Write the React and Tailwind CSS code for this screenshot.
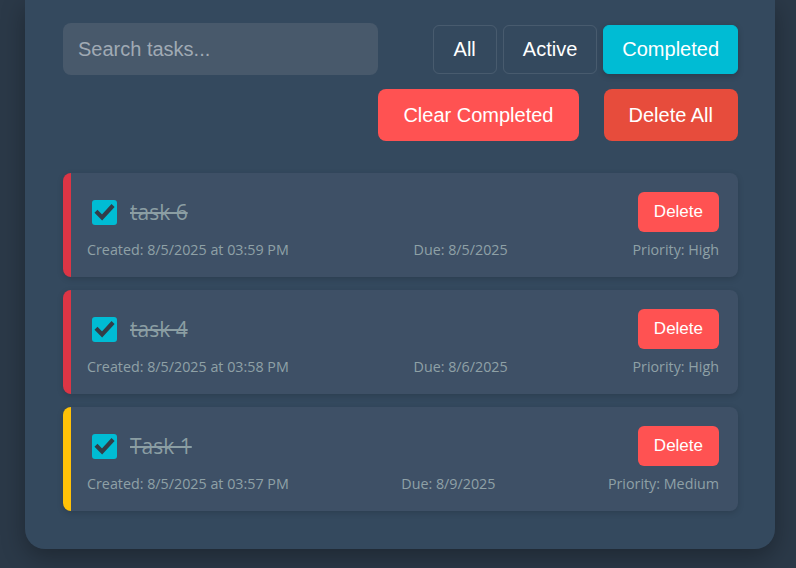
import React from 'react';

const tasks = [
    { id: 6, title: 'task 6', created: '8/5/2025 at 03:59 PM', due: '8/5/2025', priority: 'High' },
    { id: 4, title: 'task 4', created: '8/5/2025 at 03:58 PM', due: '8/6/2025', priority: 'High' },
    { id: 1, title: 'Task 1', created: '8/5/2025 at 03:57 PM', due: '8/9/2025', priority: 'Medium' },
];

function TaskCard({ task }) {
    const border = task.priority === 'High' ? 'border-[#dc3545]' : 'border-[#ffc107]';
    return (
        <div className={`bg-[#3e5066] rounded-lg border-l-[8px] ${border} pl-4 pr-[19px] pt-[19px] pb-[18px] shadow-[0_2px_6px_rgba(0,0,0,0.15)]`}>
            <div className="flex items-center justify-between h-10">
                <div className="flex items-center gap-[13px] pl-[5px]">
                    <div className="w-[25px] h-[25px] bg-[#00bcd4] rounded-[3px] flex items-center justify-center">
                        <svg className="w-[21px] h-[21px]" viewBox="0 0 20 20" fill="none">
                            <path d="M3.3 10.3l4.4 4.4L16.8 4.8" stroke="#333d48" strokeWidth="4" strokeLinecap="square" />
                        </svg>
                    </div>
                    <span className="font-['Open_Sans',sans-serif] text-[21px] text-[#8b9ea3] line-through translate-y-[1px]">{task.title}</span>
                </div>
                <button className="bg-[#ff5252] text-white font-['Liberation_Sans',Arial,sans-serif] text-[17px] leading-6 px-4 py-2 rounded-md">
                    Delete
                </button>
            </div>
            <div className="mt-2 flex justify-between font-['Open_Sans',sans-serif] text-[14.3px] leading-[19px] text-[#8fa1a6]">
                <span>Created: {task.created}</span>
                <span>Due: {task.due}</span>
                <span>Priority: {task.priority}</span>
            </div>
        </div>
    );
}

export default function App() {
    return (
        <div className="min-h-[568px] bg-[#2b3948] pl-[25px] pr-[21px] pb-[19px] font-['Liberation_Sans',Arial,sans-serif]">
            <div className="bg-[#34495e] rounded-b-[20px] pl-[38px] pr-[37px] pt-[23px] pb-[38px] shadow-[0_8px_24px_rgba(0,0,0,0.3)]">
                {/* Search + filters */}
                <div className="flex justify-between items-start">
                    <div className="w-[315px] h-[52px] bg-[#48596b] rounded-lg px-[15px] flex items-center text-[20px] text-[#a0aab4]">
                        Search tasks...
                    </div>
                    <div className="flex gap-[6px] pt-[2px]">
                        <button className="px-5 py-3 leading-[23px] text-[20px] text-white border border-white/10 rounded-md">All</button>
                        <button className="px-[19px] py-3 leading-[23px] text-[20px] text-white border border-white/10 rounded-md">Active</button>
                        <button className="px-[18px] py-3 leading-[23px] text-[20px] text-white border border-[#00bcd4] bg-[#00bcd4] rounded-md shadow-[0_2px_6px_rgba(0,0,0,0.2)]">Completed</button>
                    </div>
                </div>

                {/* Bulk actions */}
                <div className="flex justify-end gap-[25px] mt-[14px]">
                    <button className="bg-[#ff5252] text-white text-[20px] leading-6 px-[25px] py-[14px] rounded-lg">Clear Completed</button>
                    <button className="bg-[#e74c3c] text-white text-[20px] leading-6 px-[25px] py-[14px] rounded-lg">Delete All</button>
                </div>

                {/* Task list */}
                <div className="mt-8 flex flex-col gap-[13px]">
                    {tasks.map((t) => (
                        <TaskCard key={t.id} task={t} />
                    ))}
                </div>
            </div>
        </div>
    );
}
